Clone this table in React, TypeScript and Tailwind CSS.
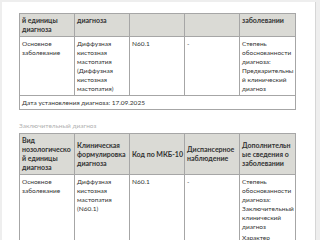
import React from "react";

const td = "border border-[#a6a6a6] pl-[2px] pr-[1px] pt-[2px] pb-[2px] align-top break-words";
const th = "border border-[#a6a6a6] pl-[2px] pr-[1px] pt-[2px] pb-[2px] text-[7px] font-bold text-left break-words bg-[#dadad5]";

export default function App() {
  return (
    <div className="w-[320px] h-[240px] overflow-hidden bg-[#eeeeee] pt-[2px] pl-[2px] pr-[4px]" style={{ fontFamily: 'Lato, "Noto Sans", sans-serif' }}>
      <div className="bg-white h-[400px] border-r border-[#d6d6d6] pl-[17px] pt-[11px] text-[#333333] text-[6.5px] leading-[9px]">
        <table className="table-fixed border-collapse w-[276px]">
          <colgroup>
            <col className="w-[55px]" />
            <col className="w-[55px]" />
            <col className="w-[55px]" />
            <col className="w-[55px]" />
            <col className="w-[56px]" />
          </colgroup>
          <thead>
            <tr>
              <th className={th + " align-top"}>й единицы диагноза</th>
              <th className={th + " align-top"}>диагноза</th>
              <th className={th + " align-top"}></th>
              <th className={th + " align-top"}></th>
              <th className={th + " align-top"}>заболевании</th>
            </tr>
          </thead>
          <tbody>
            <tr>
              <td className={td}>Основное заболевание</td>
              <td className={td}>Диффузная кистозная мастопатия (Диффузная кистозная мастопатия)</td>
              <td className={td}>N60.1</td>
              <td className={td}>-</td>
              <td className={td}>Степень обоснованности диагноза: Предварительный клинический диагноз</td>
            </tr>
            <tr>
              <td className={td} colSpan={5}>Дата установления диагноза: 17.09.2025</td>
            </tr>
          </tbody>
        </table>

        <div className="mt-[11px] mb-[3px] text-[#b0b0b0]">Заключительный диагноз</div>

        <table className="table-fixed border-collapse w-[276px]">
          <colgroup>
            <col className="w-[55px]" />
            <col className="w-[55px]" />
            <col className="w-[55px]" />
            <col className="w-[55px]" />
            <col className="w-[56px]" />
          </colgroup>
          <thead>
            <tr>
              <th className={th + " align-middle"}>Вид нозологической единицы диагноза</th>
              <th className={th + " align-middle"}>Клиническая формулировка диагноза</th>
              <th className={th + " align-middle"}>Код по МКБ-10</th>
              <th className={th + " align-middle"}>Диспансерное наблюдение</th>
              <th className={th + " align-middle"}>Дополнительные сведения о заболевании</th>
            </tr>
          </thead>
          <tbody>
            <tr>
              <td className={td}>Основное заболевание</td>
              <td className={td}>Диффузная кистозная мастопатия (N60.1)</td>
              <td className={td}>N60.1</td>
              <td className={td}>-</td>
              <td className={td}>
                <div>Степень обоснованности диагноза: Заключительный клинический диагноз</div>
                <div className="mt-[2px]">Характер заболевания: Хроническое</div>
              </td>
            </tr>
          </tbody>
        </table>
      </div>
    </div>
  );
}
